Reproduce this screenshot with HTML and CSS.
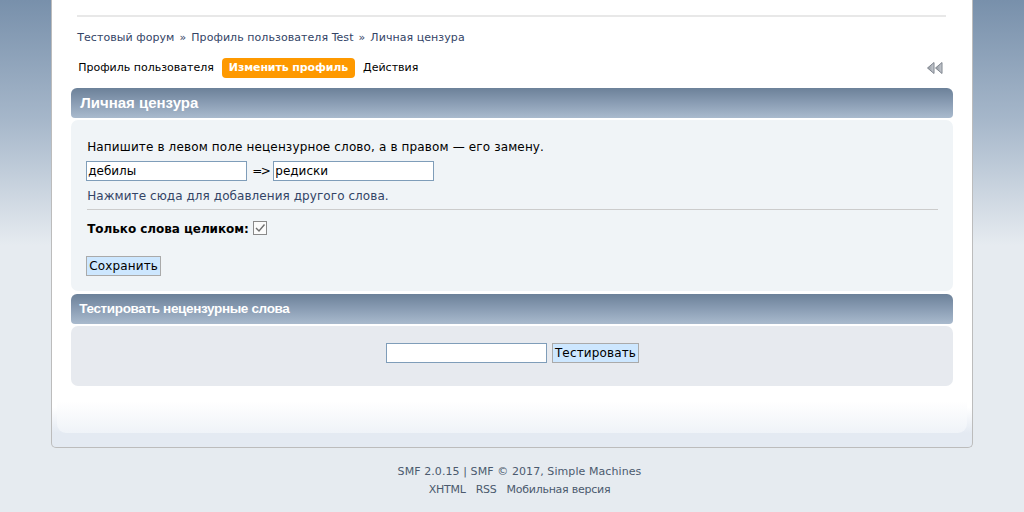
FILE: index.html
```html
<!DOCTYPE html>
<html lang="ru">
<head>
<meta charset="utf-8">
<title>Личная цензура</title>
<link rel="stylesheet" href="styles.css">
</head>
<body>
<div class="wrapper">
  <div class="content">
    <div class="topline"></div>
    <div class="navigate">
      <a href="#">Тестовый форум</a><span class="sep-nav">»</span><a href="#">Профиль пользователя Test</a><span class="sep-nav">»</span><a href="#">Личная цензура</a>
    </div>
    <div class="menubar">
      <ul class="menu">
        <li><a href="#">Профиль пользователя</a></li>
        <li class="active"><a href="#">Изменить профиль</a></li>
        <li><a href="#">Действия</a></li>
      </ul>
      <svg class="upshrink" width="17" height="12" viewBox="0 0 17 12">
        <defs>
          <linearGradient id="tg" x1="0" y1="0" x2="1" y2="0">
            <stop offset="0" stop-color="#8e949c"/>
            <stop offset="1" stop-color="#c9cdd3"/>
          </linearGradient>
        </defs>
        <polygon points="0.5,6 7,0.5 7,11.5" fill="url(#tg)" stroke="#7f858e" stroke-width="1"/>
        <polygon points="8.5,6 15,0.5 15,11.5" fill="url(#tg)" stroke="#7f858e" stroke-width="1"/>
      </svg>
    </div>

    <section class="block">
      <h3 class="catbar">Личная цензура</h3>
      <div class="panel windowbg2">
        <p class="intro">Напишите в левом поле нецензурное слово, а в правом — его замену.</p>
        <div class="pair">
          <input type="text" class="field" value="дебилы">
          <span class="arrow">=&gt;</span>
          <input type="text" class="field" value="редиски">
        </div>
        <p class="addmore"><a href="#">Нажмите сюда для добавления другого слова.</a></p>
        <hr class="sep">
        <div class="option">
          <label class="optlabel">Только слова целиком:</label>
          <svg class="check" width="14" height="14" viewBox="0 0 14 14">
            <rect x="0.5" y="0.5" width="13" height="13" fill="#fbfbfb" stroke="#8a8a8a"/>
            <polyline points="3,7 6,10 11.5,3.5" fill="none" stroke="#6f6f6f" stroke-width="1.4"/>
          </svg>
        </div>
        <div class="actions">
          <button type="button" class="btn">Сохранить</button>
        </div>
      </div>
    </section>

    <section class="block second">
      <h3 class="catbar small">Тестировать нецензурные слова</h3>
      <div class="panel windowbg centered">
        <input type="text" class="field"><button type="button" class="btn">Тестировать</button>
      </div>
    </section>
  </div>
  <div class="strip"></div>
</div>
<footer class="footer">
  <div>SMF 2.0.15 | SMF © 2017, Simple Machines</div>
  <div class="links"><a href="#">XHTML</a><a href="#">RSS</a><a href="#">Мобильная версия</a></div>
</footer>
</body>
</html>
```
FILE: styles.css
```css
html, body {
  margin: 0;
  padding: 0;
}
body {
  background: #e6ebf0 linear-gradient(to bottom, #7890ab 0, #a6b7ca 120px, #e6ebf0 245px) no-repeat;
  min-height: 512px;
  font-family: "DejaVu Sans", Verdana, sans-serif;
  color: #000;
}
a {
  color: #334466;
  text-decoration: none;
}
.wrapper {
  width: 90%;
  margin: 0 auto;
  box-sizing: border-box;
  border: 1px solid #bcbcbc;
  border-top: none;
  border-radius: 0 0 5px 5px;
  background: linear-gradient(to bottom, #fff calc(100% - 40px), #e4eaf2 calc(100% - 14px));
}
.content {
  margin: 0 5px;
  padding: 15px 14px 47px;
  background: linear-gradient(to bottom, #fff calc(100% - 32px), #eff3f8 100%);
  border-radius: 0 0 9px 9px;
}
.strip {
  height: 14px;
}
.topline {
  margin: 0 7px 0 6px;
  height: 2px;
  background: #e8e8e8;
}
.navigate {
  margin: 13px 6px 0;
  font-size: 11px;
  line-height: 16px;
  color: #334466;
  letter-spacing: 0.06px;
}
.sep-nav {
  margin: 0 5px;
}
.menubar {
  margin-top: 12px;
  display: flex;
  align-items: center;
  justify-content: space-between;
  height: 20px;
}
.menu {
  list-style: none;
  margin: 0;
  padding: 0;
  display: flex;
  gap: 1px;
}
.menu li a {
  display: block;
  padding: 0 7px;
  height: 20px;
  line-height: 20px;
  font-size: 11px;
  color: #000;
  border-radius: 4px;
}
.menu li.active a {
  background: #fe9900;
  color: #fff;
  font-weight: bold;
  letter-spacing: -0.12px;
}
.upshrink {
  margin-right: 9px;
  display: block;
}
.block {
  margin-top: 10px;
}
.block.second {
  margin-top: 3px;
}
.catbar {
  margin: 0 0 2px;
  height: 30px;
  line-height: 30px;
  padding: 0 9px;
  border-radius: 6px 6px 4px 4px;
  background: linear-gradient(to bottom, #6c8199 0, #8a9db4 50%, #a9bacd 100%);
  color: #fff;
  font-family: "Liberation Sans", Arial, sans-serif;
  font-size: 15px;
  font-weight: bold;
}
.catbar.small {
  font-size: 13.5px;
  letter-spacing: -0.35px;
  padding-left: 8px;
}
.panel {
  border-radius: 7px;
  font-size: 12px;
}
.windowbg2 {
  background: #f0f4f7;
  padding: 19px 15px 15px 16px;
}
.windowbg {
  background: #e7eaef;
  padding: 17px 15px 23px 16px;
}
.centered {
  text-align: center;
}
.intro {
  margin: 0;
  line-height: 16px;
  letter-spacing: 0.14px;
}
.pair {
  margin-top: 6px;
  display: flex;
  align-items: center;
  height: 19px;
}
.arrow {
  margin: 0 4px 0 5px;
  letter-spacing: -1.5px;
}
.field {
  box-sizing: border-box;
  width: 161px;
  height: 20px;
  border: 1px solid #7f9db9;
  background: #fff;
  padding: 0 2px 0 1px;
  margin: 0;
  font-family: "DejaVu Sans", Verdana, sans-serif;
  font-size: 12px;
  color: #000;
  vertical-align: middle;
}
.pair .field:first-child {
  margin-left: -1px;
}
.addmore {
  margin: 8px 0 0;
  line-height: 16px;
  letter-spacing: 0.07px;
}
.sep {
  margin: 5px 0 0;
  border: 0;
  height: 1px;
  background: #cccccc;
}
.option {
  margin-top: 11px;
  display: flex;
  align-items: center;
  height: 16px;
}
.optlabel {
  font-weight: bold;
  margin-right: 4px;
  letter-spacing: -0.05px;
}
.check {
  display: block;
  margin-top: -2px;
}
.actions {
  margin-top: 19px;
  height: 20px;
}
.btn {
  box-sizing: border-box;
  height: 20px;
  margin: 0 0 0 -1px;
  padding: 0 2px;
  border: 1px solid #aaaaaa;
  background: #cde7ff;
  font-family: "DejaVu Sans", Verdana, sans-serif;
  font-size: 12px;
  letter-spacing: 0.15px;
  color: #000;
  vertical-align: middle;
  border-radius: 0;
}
.centered .btn {
  margin-left: 5px;
}
.footer {
  padding: 15px 0 0 15px;
  text-align: center;
  font-size: 11px;
  line-height: 18px;
  color: #4b5a6e;
  letter-spacing: 0.08px;
}
.footer a {
  color: #4b5a6e;
}
.links a {
  margin: 0 5px;
  letter-spacing: -0.25px;
}
```
